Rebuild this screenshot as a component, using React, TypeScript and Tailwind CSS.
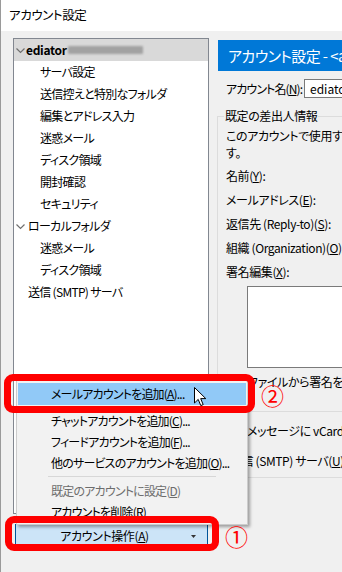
import type { ReactNode } from 'react';

type TreeItem = {
  label: ReactNode;
  indent: number;
  chevron?: boolean;
  bold?: boolean;
  selected?: boolean;
};

const TREE: TreeItem[] = [
  { label: 'ediator', indent: 26, chevron: true, bold: true, selected: true },
  { label: 'サーバ設定', indent: 40 },
  { label: '送信控えと特別なフォルダ', indent: 40 },
  { label: '編集とアドレス入力', indent: 40 },
  { label: '迷惑メール', indent: 40 },
  { label: 'ディスク領域', indent: 40 },
  { label: '開封確認', indent: 40 },
  { label: 'セキュリティ', indent: 40 },
  { label: 'ローカルフォルダ', indent: 28, chevron: true },
  { label: '迷惑メール', indent: 40 },
  { label: 'ディスク領域', indent: 40 },
  { label: '送信 (SMTP) サーバ', indent: 28 },
];

function Chevron() {
  return (
    <svg width="9" height="6" viewBox="0 0 9 6" className="absolute left-[2px] top-[9px]">
      <path d="M0.5 0.5 L4.5 4.5 L8.5 0.5" fill="none" stroke="#707070" strokeWidth="1.2" />
    </svg>
  );
}

function Cursor() {
  return (
    <svg width="13" height="20" viewBox="0 0 13 20" className="absolute left-[193px] top-[387px]">
      <path
        d="M0.5 0.5 L0.5 16 L4.2 12.4 L6.8 18.6 L9.2 17.6 L6.7 11.6 L11.8 11.6 Z"
        fill="#fff"
        stroke="#000"
        strokeWidth="1"
        strokeLinejoin="round"
      />
    </svg>
  );
}

function MenuItem({ children, highlight, disabled }: { children: ReactNode; highlight?: boolean; disabled?: boolean }) {
  return (
    <div
      className={`mx-[1px] pl-[33px] flex items-center whitespace-nowrap ${
        highlight ? 'bg-[#91c9f7] h-[22px]' : 'h-[21px]'
      } ${disabled ? 'text-[#6d6d6d]' : 'text-black'}`}
    >
      {children}
    </div>
  );
}

export default function App() {
  return (
    <div className="relative w-[342px] h-[572px] overflow-hidden bg-[#f0f0f0] border-l border-[#9a9a9a] text-[12px] leading-none tracking-[-0.4px] text-black font-['Noto_Sans_CJK_JP',sans-serif] [font-feature-settings:'palt']">
      {/* title bar */}
      <div className="h-[31px] bg-white flex items-center pl-[8px] text-[12.5px]">アカウント設定</div>

      <div className="flex pt-[7px]">
        {/* left column */}
        <div className="ml-[12px] w-[196px] shrink-0">
          <div className="h-[476px] border border-[#828790] bg-white tracking-[-0.7px]">
            {TREE.map((item, i) => (
              <div
                key={i}
                className={`relative h-[22px] flex items-center whitespace-nowrap ${item.selected ? 'bg-[#d9d9d9]' : ''}`}
                style={{ paddingLeft: item.indent - 14 }}
              >
                {item.chevron && <Chevron />}
                <span className={item.bold ? 'font-bold tracking-[-0.3px]' : ''}>{item.label}</span>
                {item.selected && (
                  <span className="ml-[1px] h-[8px] w-[75px] bg-[#a2a2a2] blur-[1px] rounded-[1px]" />
                )}
              </div>
            ))}
          </div>
          <button className="mt-[10px] ml-[2px] w-[193px] h-[24px] border border-[#005499] bg-[#cce4f7] flex items-center text-[12px]">
            <span className="flex-1 text-center pl-[2px]">
              アカウント操作(<u>A</u>)
            </span>
            <svg width="5" height="3" viewBox="0 0 5 3" className="mr-[11px]">
              <path d="M0 0 H5 L2.5 3 Z" fill="#333" />
            </svg>
          </button>
        </div>

        {/* right panel */}
        <div className="ml-[9px] w-[320px] shrink-0 pt-[2px]">
          <div className="h-[31px] bg-[#0078d7] text-white text-[15px] tracking-[-0.6px] flex items-center pl-[10px] whitespace-nowrap">
            アカウント設定 - &lt;account
          </div>
          <div className="flex items-center mt-[8px] h-[19px] whitespace-nowrap">
            <span className="pl-[8px] w-[86px] tracking-[-0.9px]">
              アカウント名(<u>N</u>):
            </span>
            <div className="h-[19px] flex-1 border border-[#7a7a7a] bg-white flex items-center pl-[5px] tracking-normal">
              ediator
            </div>
          </div>

          <fieldset className="mt-[10px] ml-[-1px] border-t border-l border-[#dcdcdc] pb-[14px]">
            <legend className="ml-[6px] px-[1px] leading-[16px]">既定の差出人情報</legend>
            <div className="pl-[8px] pt-[3px] whitespace-nowrap leading-[17px]">
              <div>このアカウントで使用する既定の差出人情報で</div>
              <div>す。</div>
              <div className="h-[24px] mt-[2px] flex items-center">
                名前(<u>Y</u>):
              </div>
              <div className="h-[24px] flex items-center">
                メールアドレス(<u>E</u>):
              </div>
              <div className="h-[24px] flex items-center">
                返信先 (Reply-to)(<u>S</u>):
              </div>
              <div className="h-[24px] flex items-center">
                組織 (Organization)(<u>O</u>):
              </div>
              <div className="h-[24px] flex items-center">
                署名編集(<u>X</u>):
              </div>
              <div className="ml-[21px] mt-[3px] h-[82px] border border-[#7a7a7a] bg-white" />
              <div className="flex items-center h-[18px] mt-[4px] ml-[3px]">
                <span className="w-[13px] h-[13px] border border-[#333] bg-white" />
                <span className="ml-[6px]">ファイルから署名を挿入する</span>
              </div>
            </div>
          </fieldset>

          <div className="mt-[7px] ml-[-1px] border-t border-[#dcdcdc] pl-[11px] whitespace-nowrap">
            <div className="flex items-center h-[20px] mt-[9px]">
              <span className="w-[13px] h-[13px] border border-[#333] bg-white" />
              <span className="ml-[6px]">メッセージに vCard を添付する</span>
            </div>
            <div className="h-[22px] mt-[9px] flex items-center pl-[2px]">
              送信 (SMTP) サーバ(<u>U</u>):
            </div>
          </div>
          <div className="mt-[5px] ml-[-1px] border-t border-[#dcdcdc]" />
        </div>
      </div>

      {/* popup menu */}
      <div className="absolute left-[15px] top-[380px] w-[232px] bg-[#f2f2f2] border border-[#cccccc] py-[2px] tracking-[-0.8px] shadow-[2px_2px_3px_rgba(0,0,0,0.35)]">
        <MenuItem highlight>
          メールアカウントを追加(<u>A</u>)...
        </MenuItem>
        <div className="h-[5px]" />
        <MenuItem>
          チャットアカウントを追加(<u>C</u>)...
        </MenuItem>
        <MenuItem>
          フィードアカウントを追加(<u>F</u>)...
        </MenuItem>
        <MenuItem>
          他のサービスのアカウントを追加(<u>O</u>)...
        </MenuItem>
        <div className="h-[7px] flex items-center mx-[31px]">
          <div className="w-full border-t border-[#d7d7d7]" />
        </div>
        <MenuItem disabled>
          既定のアカウントに設定(<u>D</u>)
        </MenuItem>
        <MenuItem>
          アカウントを削除(<u>R</u>)
        </MenuItem>
      </div>

      {/* annotations */}
      <div className="absolute left-[3px] top-[374px] w-[251px] h-[39px] border-[7px] border-[#ff0000] rounded-[9px]" />
      <div className="absolute left-[4px] top-[516px] w-[214px] h-[35px] border-[7px] border-[#ff0000] rounded-[9px]" />
      <div className="absolute left-[260px] top-[384px] text-[#ff0000] text-[23px] leading-none tracking-normal">②</div>
      <div className="absolute left-[224px] top-[525px] text-[#ff0000] text-[23px] leading-none tracking-normal">①</div>
      <Cursor />
    </div>
  );
}
